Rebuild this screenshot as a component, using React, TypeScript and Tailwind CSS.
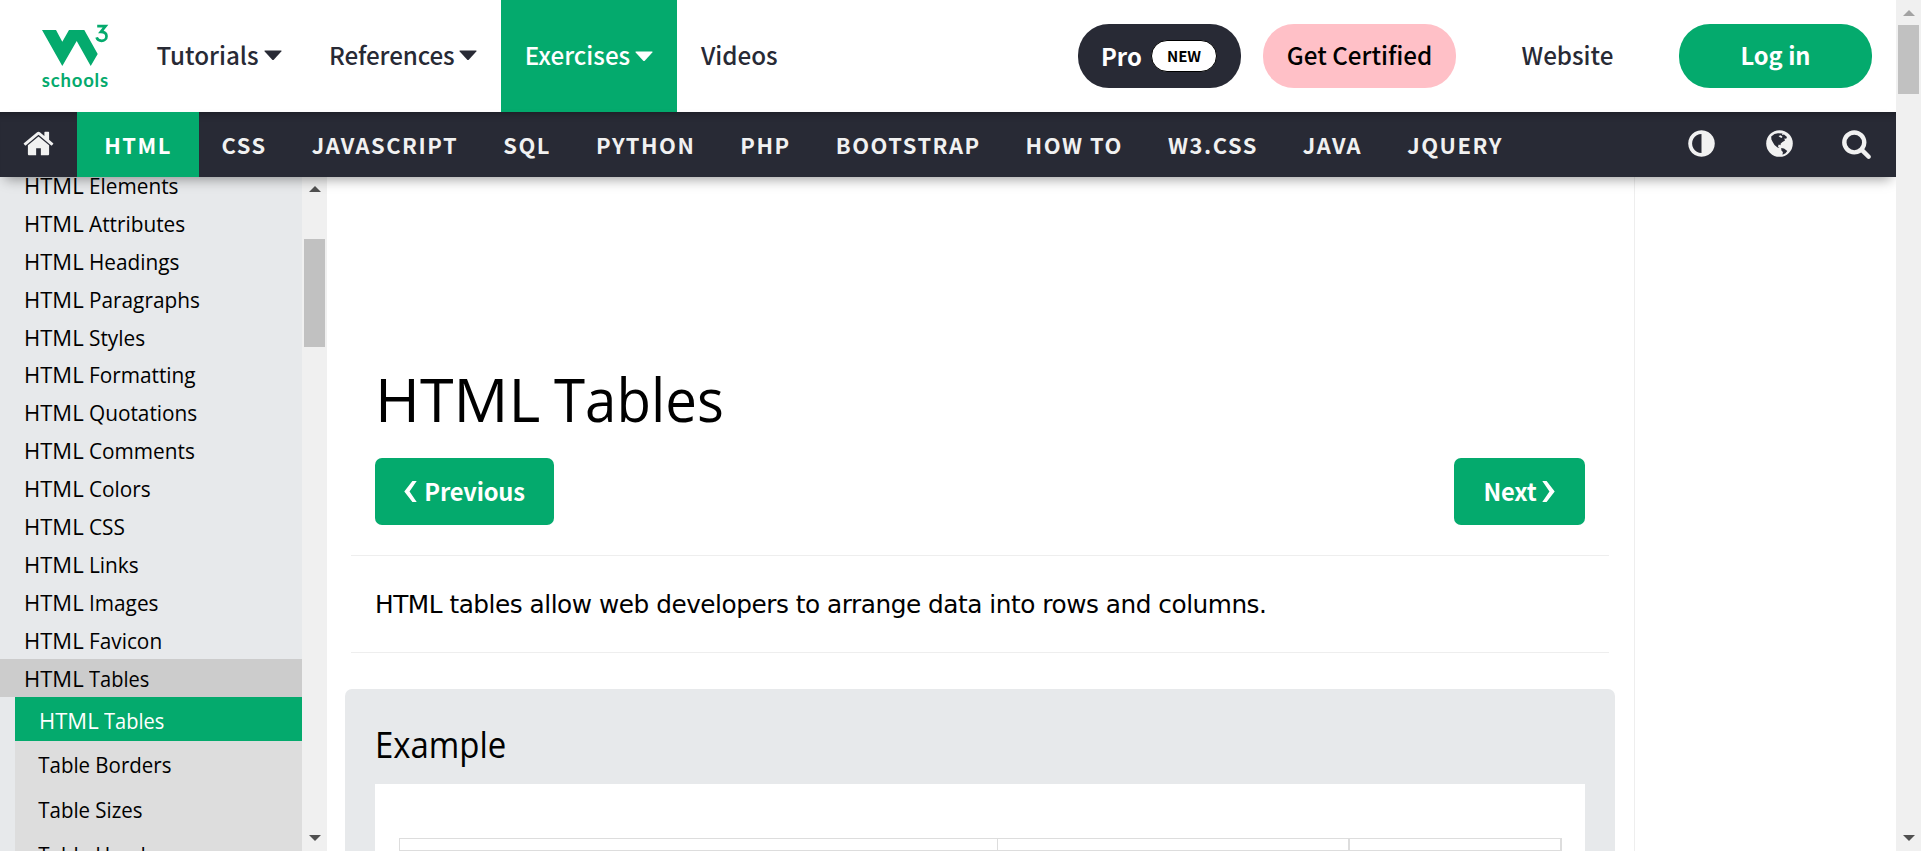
import React from "react";

const SANS = "font-['Noto_Sans_CJK_SC',sans-serif]";
const UI = "font-['Open_Sans',sans-serif]";

const topics = ["CSS", "JAVASCRIPT", "SQL", "PYTHON", "PHP", "BOOTSTRAP", "HOW TO", "W3.CSS", "JAVA", "JQUERY"];
const chapters = ["Elements", "Attributes", "Headings", "Paragraphs", "Styles", "Formatting", "Quotations", "Comments", "Colors", "CSS", "Links", "Images", "Favicon"];

function Caret() {
  return (
    <svg width="18" height="11" viewBox="0 0 18 11" className="shrink-0" fill="currentColor">
      <path d="M1 .5h16q1 0 .3.9L10 9.6q-1 1-2 0L.7 1.4Q0 .5 1 .5z" />
    </svg>
  );
}

function Arrow({ down = false, color }: { down?: boolean; color: string }) {
  return (
    <svg width="12" height="6" viewBox="0 0 12 6" fill={color}>
      <path d={down ? "M0 0h12L6 6z" : "M0 6h12L6 0z"} />
    </svg>
  );
}

function Logo() {
  return (
    <svg width="70" height="68" viewBox="0 0 70 68" fill="#04aa6d" className="block">
      <path d="M0 8h14l6.300 11.700L27 8h15.300L55.700 32 48.700 44 34.700 19 20.300 44z" />
      <path d="M55.200 4.200h8.300l-4.600 5.600c4 0 5.600 2 5.600 4.400 0 2.900-2.300 4.600-4.900 4.600-2.500 0-4.300-1.200-5-3.400" fill="none" stroke="#04aa6d" strokeWidth="2.700" />
      <text x="-0.300" y="64.500" fontFamily="Lato" fontWeight="700" fontSize="18.500" textLength="66.500">schools</text>
    </svg>
  );
}

function Lesson({ name }: { name: string }) {
  const scale = name === "Tables" ? "scale-x-[0.91]" : "scale-x-[0.945]";
  return <>HTML <span className={`inline-block origin-left ${scale}`}>{name}</span></>;
}

export default function App() {
  return (
    <div className="flex h-[851px] w-[1921px] overflow-hidden bg-white text-black">
      <div className="flex w-[1896px] flex-col overflow-hidden">
        <header className={`flex h-28 shrink-0 items-center text-[24.2px] font-medium text-[#282a35] ${SANS}`}>
          <div className="ml-[42px] w-[114.5px]"><Logo /></div>
          <div className="flex w-[172.500px] items-center gap-[5px]"><span className="pb-px">Tutorials</span><Caret /></div>
          <div className="flex w-[172px] items-center gap-[4px]"><span className="pb-px tracking-[-0.1px]">References</span><Caret /></div>
          <div className="flex h-28 w-[176px] items-center justify-center gap-[5px] bg-[#04aa6d] text-white"><span className="pb-px">Exercises</span><Caret /></div>
          <div className="w-[401px] pb-px pl-6">Videos</div>
          <div className="mr-[22px] flex h-16 w-[163px] items-center rounded-[31px] bg-[#282a35] pl-[23px] font-bold text-white">
            <span className="w-[50px] pb-px text-[23.8px]">Pro</span>
            <span className="flex h-8 w-[66px] items-center justify-center rounded-full border border-black bg-white text-[15px] text-black">NEW</span>
          </div>
          <div className="flex h-16 w-[193px] items-center justify-center rounded-[31px] bg-[#ffc0c7] pb-px text-black">Get Certified</div>
          <div className="w-[223px] pb-px text-center">Website</div>
          <div className="flex h-16 w-[193px] items-center justify-center rounded-[31px] bg-[#04aa6d] text-[23.7px] font-bold text-white">Log in</div>
        </header>

        <nav className={`relative z-10 flex h-[65px] shrink-0 items-center bg-[#282a35] text-[21.9px] font-bold tracking-[1.530px] text-[#f1f1f1] shadow-[0_7px_12px_-5px_rgba(0,0,0,0.4),inset_0_9px_9px_-9px_rgba(0,0,0,0.45)] ${SANS}`}>
          <div className="flex w-[77px] justify-center pb-[2px] pr-px">
            <svg width="33" height="33" viewBox="0 0 1792 1792" fill="currentColor">
              <path d="M1472 992v480q0 26-19 45t-45 19h-384v-384h-256v384h-384q-26 0-45-19t-19-45v-480q0-1 .5-3t.5-3l575-474 575 474q1 2 1 6zm223-69l-62 74q-8 9-21 11h-3q-13 0-21-7l-692-577-692 577q-12 8-24 7-13-2-21-11l-62-74q-8-10-7-23.5t11-21.5l719-599q32-26 76-26t76 26l244 204v-195q0-14 9-23t23-9h192q14 0 23 9t9 23v408l219 182q10 8 11 21.500t-7 23.500z" />
            </svg>
          </div>
          <div className="flex h-full w-[122px] items-center justify-center bg-[#04aa6d] pt-[2px] text-white">HTML</div>
          {topics.map((t) => <div key={t} className="px-[22.500px] pt-[2px]">{t}</div>)}
          <div className="ml-auto flex w-[210px] items-center gap-[46.500px] pb-[3px]">
            <svg width="31" height="31" viewBox="0 0 1792 1792" fill="currentColor">
              <path d="M896 1440v-1088q-148 0-273 73t-198 198-73 273 73 273 198 198 273 73zm768-544q0 209-103 385.500t-279.500 279.500-385.500 103-385.500-103-279.500-279.500-103-385.500 103-385.500 279.500-279.500 385.500-103 385.500 103 279.500 279.500 103 385.500z" />
            </svg>
            <svg width="31" height="31" viewBox="-2 -2 31 31">
              <circle cx="13.500" cy="13.500" r="13.300" fill="#f1f1f1" />
              <path fill="#282a35" d="M5.200 6.500 8.500 4l3.500-.8 4.500.3-.5 1.500 2-.5 3 2.500-.8 1.800-1.900-.4.7 2.200-2.500 1.500-1.800 1.500-.2 1.600-1.700-.6-.9 2 1.600 1.200-2-.3L8.500 15 6.700 12 5.400 9.500zM15.200 18l2.800.4 3.300 2.600-1.800 2.200-3 1.500.4-2.600-1.500-1.600z" />
              <path fill="#f1f1f1" d="m12.500 6 2.200-.8 1.800 1.500-1 1.200-1.500-.6z" />
            </svg>
            <svg width="31" height="31" viewBox="0 0 1792 1792" fill="currentColor">
              <path d="M1216 832q0-185-131.500-316.500t-316.500-131.500-316.500 131.500-131.500 316.500 131.500 316.500 316.500 131.500 316.500-131.500 131.500-316.500zm512 832q0 52-38 90t-90 38q-54 0-90-38l-343-342q-179 124-399 124-143 0-273.500-55.500t-225-150-150-225-55.500-273.500 55.500-273.500 150-225 225-150 273.500-55.500 273.500 55.500 225 150 150 225 55.500 273.500q0 220-124 399l343 343q37 37 37 90z" />
            </svg>
          </div>
        </nav>

        <div className="flex min-h-0 flex-1">
          <aside className={`w-[302px] overflow-hidden bg-[#e7e9eb] text-[22px] ${UI}`}>
            <div className="-mt-[11px]">
              {chapters.map((c) => <div key={c} className="h-[37.900px] pl-6 leading-[38px]"><Lesson name={c} /></div>)}
            </div>
            <div className="h-[38px] bg-[#ccc] pl-6 leading-[38px]"><Lesson name="Tables" /></div>
            <div className="ml-[15px] bg-[#ddd] leading-[46px]">
              <div className="h-11 bg-[#04aa6d] pl-6 text-white"><Lesson name="Tables" /></div>
              <div className="h-[45px] origin-left scale-x-[0.93] pl-[25px]">Table Borders</div>
              <div className="h-[45px] origin-left scale-x-[0.93] pl-[25px]">Table Sizes</div>
              <div className="h-[45px] origin-left scale-x-[0.93] pl-[25px]">Table Headers</div>
            </div>
          </aside>
          <div className="flex w-[25px] flex-col items-center bg-[#f0f0f0] pt-[9px] pb-[10px]">
            <Arrow color="#505050" />
            <div className="mt-[47px] h-[108px] w-[21px] bg-[#c1c1c1]" />
            <div className="mt-auto"><Arrow down color="#505050" /></div>
          </div>

          <main className="flex w-[1308px] flex-col border-r border-[#eeeeee] pl-[18px]">
            <h1 className={`mt-[177px] ml-[30px] h-[104px] text-[61px] leading-[90px] ${UI}`}>HTML <span className="-ml-[2px] inline-block origin-left scale-x-[0.925]">Tables</span></h1>
            <div className={`ml-[30px] flex w-[1210px] justify-between text-[23.700px] font-bold text-white ${SANS}`}>
              <div className="flex h-[67px] w-[179px] items-center justify-center gap-[7px] rounded-[7px] bg-[#04aa6d]">
                <svg width="13" height="21" viewBox="0 0 13 22" fill="currentColor"><path d="M8.500 0H13L5.500 11 13 22H8.500L0 11z" /></svg>
                <span className="tracking-[-0.200px]">Previous</span>
              </div>
              <div className="flex h-[67px] w-[131px] items-center justify-center gap-[6px] rounded-[7px] bg-[#04aa6d]">
                <span className="tracking-[-0.200px]">Next</span>
                <svg width="13" height="21" viewBox="0 0 13 22" fill="currentColor"><path d="M4.500 0H0l7.500 11L0 22h4.500L13 11z" /></svg>
              </div>
            </div>
            <div className="mt-[30px] ml-1.5 h-px w-[1258px] bg-[#eee]" />
            <p className="ml-[30px] h-24 text-[24.750px] leading-[98px] tracking-[-0.466px] font-['DejaVu_Sans',sans-serif]">HTML tables allow web developers to arrange data into rows and columns.</p>
            <div className="ml-1.5 h-px w-[1258px] bg-[#eee]" />
            <section className="mt-9 flex h-[162px] w-[1270px] flex-col rounded-t-[7px] bg-[#e7e9eb] px-[30px]">
              <h3 className={`h-[95px] origin-left scale-x-[0.915] pt-[31px] text-[36px] leading-[50px] ${UI}`}>Example</h3>
              <div className="flex-1 bg-white pt-[54px] pr-[23px] pl-6">
                <div className="flex h-full border border-r-2 border-[#ddd]">
                  <div className="w-[598px] border-r border-[#ddd]" />
                  <div className="w-[352px] border-r-2 border-[#ddd]" />
                </div>
              </div>
            </section>
          </main>
        </div>
      </div>

      <div className="flex w-[25px] flex-col items-center bg-[#f0f0f0] pt-[10px] pb-[10px]">
        <Arrow color="#a3a3a3" />
        <div className="mt-[9px] h-[69px] w-[21px] bg-[#c1c1c1]" />
        <div className="mt-auto"><Arrow down color="#505050" /></div>
      </div>
    </div>
  );
}
